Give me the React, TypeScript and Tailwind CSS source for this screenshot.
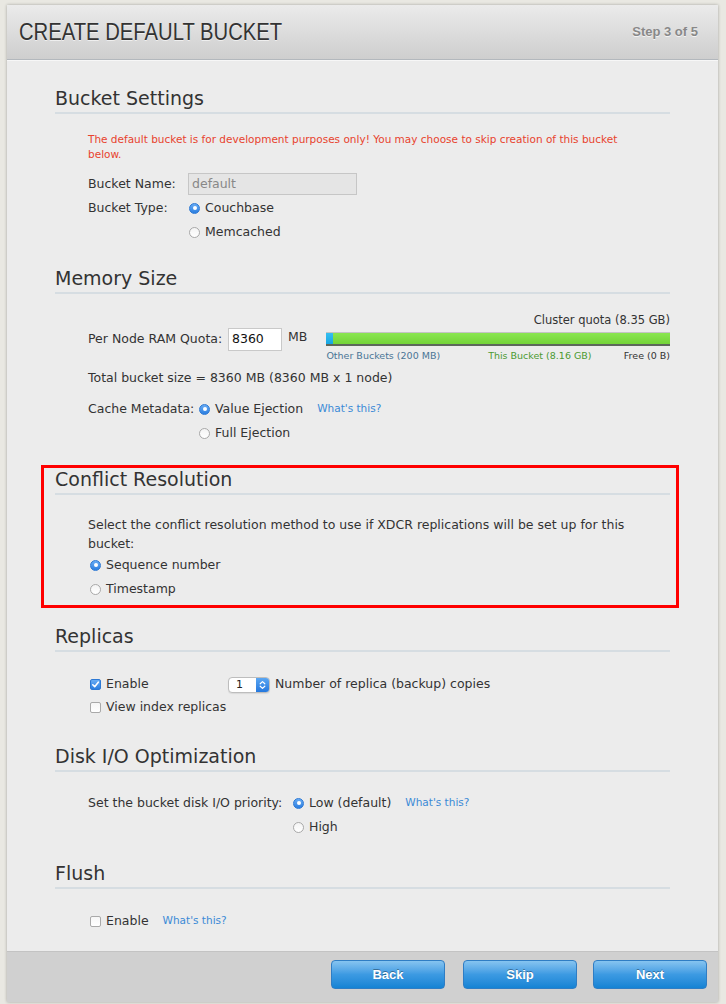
import React from "react";

function Radio({ checked }: { checked: boolean }) {
  if (checked) {
    return (
      <span className="inline-flex h-[11px] w-[11px] shrink-0 items-center justify-center rounded-full border border-[#2c78d4] bg-gradient-to-b from-[#68acf4] to-[#2a7ee0]">
        <span className="h-[4px] w-[4px] rounded-full bg-white" />
      </span>
    );
  }
  return (
    <span className="inline-block h-[11px] w-[11px] shrink-0 rounded-full border border-[#a9a9a9] bg-gradient-to-b from-[#f4f4f4] to-white" />
  );
}

function Checkbox({ checked }: { checked: boolean }) {
  if (checked) {
    return (
      <span className="inline-flex h-[11px] w-[11px] shrink-0 items-center justify-center rounded-[2px] border border-[#2c78d4] bg-gradient-to-b from-[#68acf4] to-[#2a7ee0]">
        <svg width="9" height="9" viewBox="0 0 9 9">
          <polyline points="1.8,4.8 3.7,6.7 7.3,2.2" fill="none" stroke="white" strokeWidth="1.6" strokeLinecap="round" strokeLinejoin="round" />
        </svg>
      </span>
    );
  }
  return (
    <span className="inline-block h-[11px] w-[11px] shrink-0 rounded-[2px] border border-[#a9a9a9] bg-gradient-to-b from-[#f6f6f6] to-white" />
  );
}

function WhatsThis() {
  return <span className="ml-[14px] text-[10.5px] text-[#3b8ad6]">What's this?</span>;
}

function Section({
  title,
  className = "",
  children,
}: {
  title: string;
  className?: string;
  children: React.ReactNode;
}) {
  return (
    <section className={className}>
      <h2 className="border-b-2 border-[#d6dde2] pb-[2px] text-[19px] leading-[24px] text-[#333]">{title}</h2>
      <div className="pl-[33px]">{children}</div>
    </section>
  );
}

function Button({ label, className = "" }: { label: string; className?: string }) {
  return (
    <button className={`flex h-[29px] w-[114px] items-center justify-center rounded-[4px] border border-[#2f7dc4] bg-gradient-to-b from-[#86c4f0] via-[#3c9ae2] to-[#1383d4] font-['Liberation_Sans',Arial,sans-serif] text-[13px] font-bold text-white [text-shadow:0_-1px_0_rgba(0,0,0,0.35)] ${className}`}>
      {label}
    </button>
  );
}

export default function App() {
  return (
    <div className="h-[1004px] w-[726px] bg-[#e9e8e2] pl-[7px] pt-[5px] font-['DejaVu_Sans',sans-serif] text-[12.5px] text-[#333]">
      <div className="flex h-[997px] w-[711px] flex-col bg-[#ececec] shadow-[0_0_3px_rgba(0,0,0,0.3)]">
        <header className="flex h-[55px] shrink-0 items-center justify-between border-b border-[#b3b8bd] bg-gradient-to-b from-[#ebebeb] to-[#cecece] pl-[12px] pr-[20px]">
          <h1 className="origin-left scale-x-[0.88] whitespace-nowrap font-['Liberation_Sans',Arial,sans-serif] text-[23px] leading-[26px] text-[#333] [text-shadow:0_1px_0_rgba(255,255,255,0.6)]">
            CREATE DEFAULT BUCKET
          </h1>
          <span className="font-['Liberation_Sans',Arial,sans-serif] text-[13px] font-bold text-[#888] [text-shadow:0_1px_0_rgba(255,255,255,0.7)]">
            Step 3 of 5
          </span>
        </header>

        <main className="flex-1 border-t border-[#f7f7f7] px-[48px] pt-[25px]">
          <Section title="Bucket Settings">
            <p className="mt-[18px] max-w-[552px] text-[10.5px] leading-[15px] text-[#e8432e]">
              The default bucket is for development purposes only! You may choose to skip creation of this bucket below.
            </p>
            <div className="mt-[11px] flex h-[22px] items-center">
              <span className="w-[100px]">Bucket Name:</span>
              <div className="flex h-[22px] w-[169px] items-center border border-[#c6c6c6] bg-[#e5e5e5] pl-[3px] text-[#888]">
                default
              </div>
            </div>
            <div className="mt-[1px] flex h-[24px] items-center">
              <span className="w-[101px]">Bucket Type:</span>
              <Radio checked />
              <span className="ml-[5px]">Couchbase</span>
            </div>
            <div className="flex h-[24px] items-center pl-[101px]">
              <Radio checked={false} />
              <span className="ml-[5px]">Memcached</span>
            </div>
          </Section>

          <Section title="Memory Size" className="mt-[22px]">
            <div className="mt-[19px] flex items-start">
              <div className="mt-[15px] flex h-[23px] items-center">
                <span className="w-[140px]">Per Node RAM Quota:</span>
                <div className="flex h-[23px] w-[54px] items-center border border-[#c9c9c9] bg-white pl-[3px] text-[12.5px] text-[#111]">
                  8360
                </div>
                <span className="mb-[4px] ml-[6px]">MB</span>
              </div>
              <div className="ml-[19px] flex flex-1 flex-col">
                <div className="text-right text-[11.5px] leading-[14px] text-[#333]">Cluster quota (8.35 GB)</div>
                <div className="mt-[5px] flex h-[14px] border-t border-b-2 border-t-[#c4c4c4] border-b-[#5d675b] bg-gradient-to-b from-[#8ae650] to-[#74d438]">
                  <div className="w-[7px] bg-gradient-to-b from-[#35bff0] to-[#14a6e4]" />
                </div>
                <div className="mt-[4px] flex text-[9.5px] leading-[12px]">
                  <span className="text-[#4a7596]">Other Buckets (200 MB)</span>
                  <span className="ml-[48px] text-[#4b9a31]">This Bucket (8.16 GB)</span>
                  <span className="ml-auto text-[#333]">Free (0 B)</span>
                </div>
              </div>
            </div>
            <div className="mt-[8px] leading-[16px]">Total bucket size = 8360 MB (8360 MB x 1 node)</div>
            <div className="mt-[11px] flex h-[24px] items-center">
              <span className="w-[111px]">Cache Metadata:</span>
              <Radio checked />
              <span className="ml-[5px]">Value Ejection</span>
              <WhatsThis />
            </div>
            <div className="flex h-[24px] items-center pl-[111px]">
              <Radio checked={false} />
              <span className="ml-[5px]">Full Ejection</span>
            </div>
          </Section>

          <div className="relative mt-[22px]">
            <Section title="Conflict Resolution">
              <p className="mt-[20px] max-w-[552px] leading-[19px]">
                Select the conflict resolution method to use if XDCR replications will be set up for this bucket:
              </p>
              <div className="flex h-[24px] items-center pl-[2px]">
                <Radio checked />
                <span className="ml-[5px]">Sequence number</span>
              </div>
              <div className="flex h-[24px] items-center pl-[2px]">
                <Radio checked={false} />
                <span className="ml-[5px]">Timestamp</span>
              </div>
            </Section>
            <div className="pointer-events-none absolute -bottom-[7px] -left-[14px] -right-[9px] -top-[2px] border-[3px] border-[#ff0000]" />
          </div>

          <Section title="Replicas" className="mt-[23px]">
            <div className="mt-[21px] flex h-[23px] items-center">
              <div className="flex w-[140px] items-center pl-[2px]">
                <Checkbox checked />
                <span className="ml-[5px]">Enable</span>
              </div>
              <div className="flex h-[16px] w-[42px] items-center overflow-hidden rounded-[4px] border border-[#bdbdbd] bg-white shadow-[0_1px_1px_rgba(0,0,0,0.08)]">
                <span className="flex-1 pl-[7px] text-[11px] leading-none text-[#222]">1</span>
                <span className="flex h-full w-[13px] items-center justify-center bg-gradient-to-b from-[#5aa6f2] to-[#2478de]">
                  <svg width="7" height="10" viewBox="0 0 7 10">
                    <polyline points="1.2,3.8 3.5,1.6 5.8,3.8" fill="none" stroke="white" strokeWidth="1.2" strokeLinecap="round" strokeLinejoin="round" />
                    <polyline points="1.2,6.2 3.5,8.4 5.8,6.2" fill="none" stroke="white" strokeWidth="1.2" strokeLinecap="round" strokeLinejoin="round" />
                  </svg>
                </span>
              </div>
              <span className="ml-[5px]">Number of replica (backup) copies</span>
            </div>
            <div className="flex h-[23px] items-center pl-[2px]">
              <Checkbox checked={false} />
              <span className="ml-[5px]">View index replicas</span>
            </div>
          </Section>

          <Section title="Disk I/O Optimization" className="mt-[25px]">
            <div className="mt-[19px] flex h-[24px] items-center">
              <span className="w-[205px]">Set the bucket disk I/O priority:</span>
              <Radio checked />
              <span className="ml-[5px]">Low (default)</span>
              <WhatsThis />
            </div>
            <div className="flex h-[24px] items-center pl-[205px]">
              <Radio checked={false} />
              <span className="ml-[5px]">High</span>
            </div>
          </Section>

          <Section title="Flush" className="mt-[22px]">
            <div className="mt-[20px] flex h-[24px] items-center pl-[2px]">
              <Checkbox checked={false} />
              <span className="ml-[5px]">Enable</span>
              <WhatsThis />
            </div>
          </Section>
        </main>

        <footer className="flex h-[51px] shrink-0 items-start justify-end border-t border-[#c3c3c3] bg-[#d0d0d0] pr-[11px] pt-[8px]">
          <Button label="Back" className="mr-[18px]" />
          <Button label="Skip" className="mr-[16px]" />
          <Button label="Next" />
        </footer>
      </div>
    </div>
  );
}
